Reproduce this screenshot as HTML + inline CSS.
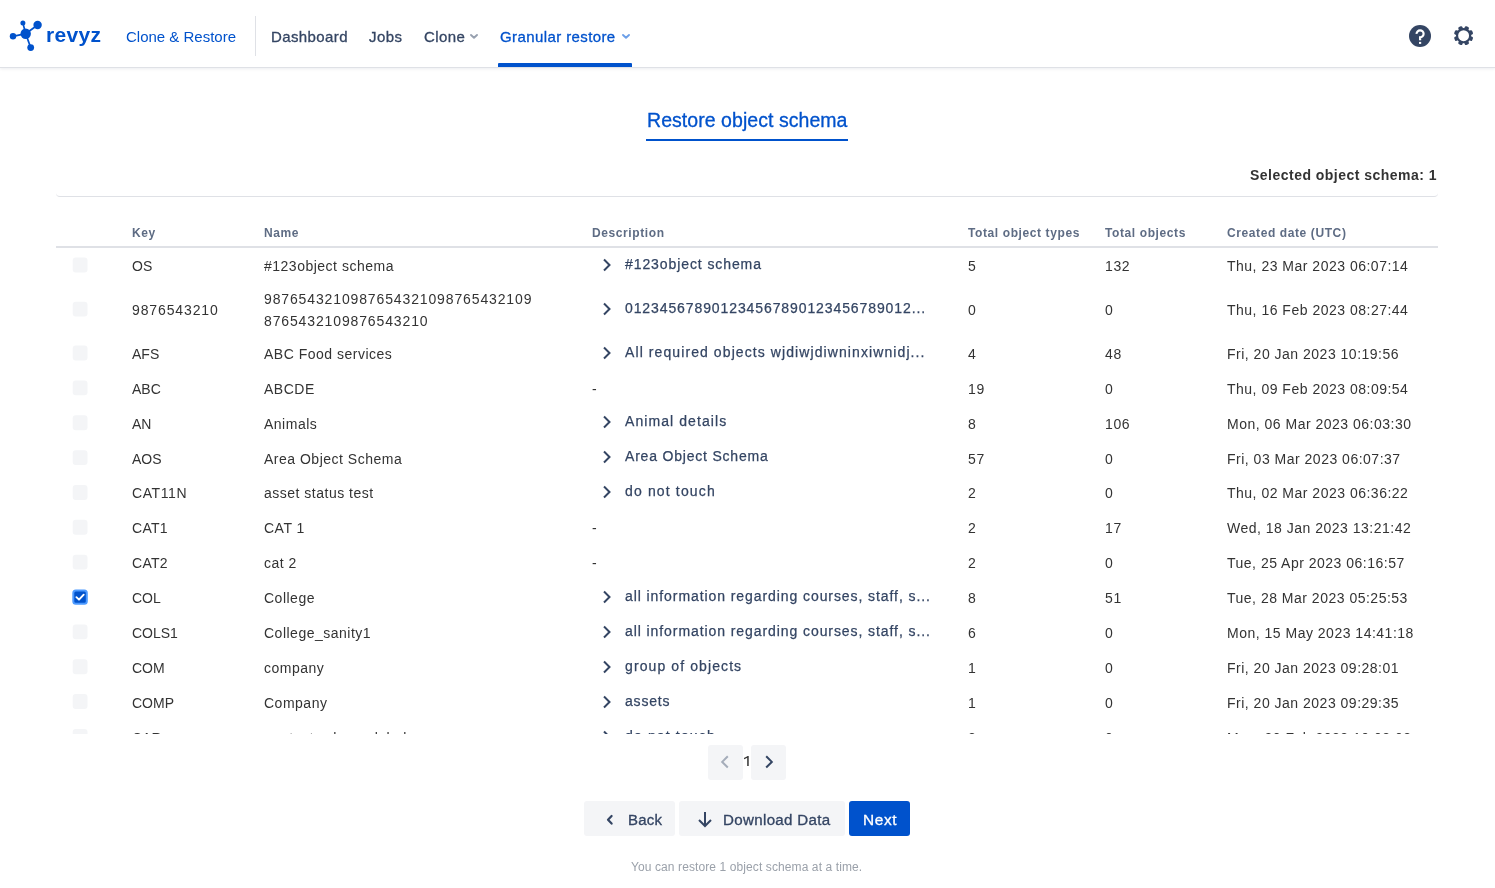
<!DOCTYPE html>
<html><head><meta charset="utf-8">
<style>
html,body{margin:0;padding:0;background:#fff;width:1495px;height:888px;overflow:hidden;font-family:"Liberation Sans",sans-serif;}
#root{position:absolute;left:0;top:0;width:1495px;height:888px;will-change:transform;background:#fff;}
.a{position:absolute;white-space:pre;line-height:1;}
#hdr{position:absolute;left:0;top:0;width:1495px;height:67px;background:#fff;border-bottom:1px solid #dfe1e6;box-shadow:0 1px 3px rgba(9,30,66,0.08);}
.nav{position:absolute;top:29px;font-size:15px;line-height:1;white-space:pre;color:#344563;-webkit-text-stroke:0.3px currentColor;letter-spacing:0.4px;}
#tbl{position:absolute;left:0;top:248px;width:1495px;height:486px;overflow:hidden;}
#tbl .in{position:absolute;left:0;top:-248px;width:1495px;height:1000px;}
.c{position:absolute;white-space:pre;line-height:1;font-size:14px;color:#333;}
.nm{letter-spacing:0.75px;}
.ds{color:#344563;letter-spacing:1px;-webkit-text-stroke:0.25px currentColor;}
.dg{letter-spacing:0.6px;}
.dt{letter-spacing:0.5px;}
.cb{position:absolute;left:72.4px;width:15px;height:15px;border-radius:3px;background:#f4f5f7;box-sizing:border-box;}
.cb.on{background:#0052cc;border:2px solid #4c9aff;}
.cb.on svg{position:absolute;left:-2px;top:-2px;}
.chev{position:absolute;left:601px;}
.th{position:absolute;top:227px;font-size:12px;font-weight:bold;color:#5e6c84;line-height:1;white-space:pre;letter-spacing:0.6px;}
.btn{position:absolute;top:801px;height:35px;border-radius:3px;background:#f4f5f7;}
</style></head><body><div id="root">
<div id="hdr">
  <svg style="position:absolute;left:0;top:0" width="48" height="60" viewBox="0 0 48 60">
    <g stroke="#0052cc" stroke-width="1.7" fill="none">
      <line x1="25.7" y1="33.7" x2="22.9" y2="23.1"/>
      <line x1="25.7" y1="33.7" x2="37.6" y2="25"/>
      <line x1="25.7" y1="33.7" x2="13" y2="36.3"/>
      <line x1="25.7" y1="33.7" x2="30.7" y2="47.6"/>
    </g>
    <g fill="#0052cc">
      <circle cx="25.7" cy="33.7" r="5.2"/>
      <circle cx="22.9" cy="23.1" r="2.5"/>
      <circle cx="37.6" cy="25" r="4.2"/>
      <circle cx="13" cy="36.3" r="3.2"/>
      <circle cx="30.7" cy="47.6" r="3.4"/>
    </g>
  </svg>
  <div class="a" style="left:46px;top:24px;font-size:21px;font-weight:bold;color:#0052cc;letter-spacing:0.3px;">revyz</div>
  <div class="nav" style="left:126px;color:#0052cc;letter-spacing:0;-webkit-text-stroke:0;">Clone &amp; Restore</div>
  <div style="position:absolute;left:255px;top:16px;width:1px;height:40px;background:#dfe1e6;"></div>
  <div class="nav" style="left:271px;">Dashboard</div>
  <div class="nav" style="left:369px;">Jobs</div>
  <div class="nav" style="left:424px;">Clone</div>
  <svg style="position:absolute;left:469px;top:32px" width="10" height="9" viewBox="0 0 10 9"><path d="M2 3 L5 5.8 L8 3" fill="none" stroke="#97a0af" stroke-width="1.9" stroke-linecap="round" stroke-linejoin="round"/></svg>
  <div class="nav" style="left:500px;color:#0052cc;">Granular restore</div>
  <svg style="position:absolute;left:621px;top:32px" width="10" height="9" viewBox="0 0 10 9"><path d="M2 3 L5 5.8 L8 3" fill="none" stroke="#6c9fe8" stroke-width="1.9" stroke-linecap="round" stroke-linejoin="round"/></svg>
  <div style="position:absolute;left:498px;top:63px;width:134px;height:4px;background:#0052cc;border-radius:1px 1px 0 0;"></div>
  <svg style="position:absolute;left:1408px;top:24px" width="24" height="24" viewBox="0 0 24 24">
    <circle cx="12" cy="12" r="11" fill="#344563"/>
    <path d="M8.6 9.9 A3.5 3.5 0 1 1 12.1 13.3 L12.1 16.3" fill="none" stroke="#fff" stroke-width="2.2"/>
    <rect x="11" y="17.9" width="2.2" height="2" fill="#fff"/>
  </svg>
  <svg style="position:absolute;left:1452px;top:24px" width="24" height="24" viewBox="0 0 24 24">
    <g fill="#344563"><circle cx="11.6" cy="11.6" r="7.6"/><rect x="9.4" y="1.9" width="4.4" height="6" rx="1.3" transform="rotate(22.5 11.6 11.6)"/><rect x="9.4" y="1.9" width="4.4" height="6" rx="1.3" transform="rotate(67.5 11.6 11.6)"/><rect x="9.4" y="1.9" width="4.4" height="6" rx="1.3" transform="rotate(112.5 11.6 11.6)"/><rect x="9.4" y="1.9" width="4.4" height="6" rx="1.3" transform="rotate(157.5 11.6 11.6)"/><rect x="9.4" y="1.9" width="4.4" height="6" rx="1.3" transform="rotate(202.5 11.6 11.6)"/><rect x="9.4" y="1.9" width="4.4" height="6" rx="1.3" transform="rotate(247.5 11.6 11.6)"/><rect x="9.4" y="1.9" width="4.4" height="6" rx="1.3" transform="rotate(292.5 11.6 11.6)"/><rect x="9.4" y="1.9" width="4.4" height="6" rx="1.3" transform="rotate(337.5 11.6 11.6)"/></g>
    <circle cx="11.6" cy="11.7" r="5.45" fill="#fff"/>
  </svg>
</div>

<div class="a" style="left:647px;top:111px;font-size:19.5px;color:#0052cc;-webkit-text-stroke:0.3px currentColor;letter-spacing:0.05px;">Restore object schema</div>
<div style="position:absolute;left:646px;top:139px;width:202px;height:2px;background:#0052cc;"></div>

<div class="a" style="left:1250px;top:168px;font-size:14px;font-weight:bold;color:#333;letter-spacing:0.48px;">Selected object schema: 1</div>
<div style="position:absolute;left:56px;top:176px;width:1382px;height:20px;border-bottom:1px solid #dfe1e6;border-radius:0 0 4px 4px;"></div>

<div class="th" style="left:132px;">Key</div>
<div class="th" style="left:264px;">Name</div>
<div class="th" style="left:592px;">Description</div>
<div class="th" style="left:968px;">Total object types</div>
<div class="th" style="left:1105px;">Total objects</div>
<div class="th" style="left:1227px;">Created date (UTC)</div>
<div style="position:absolute;left:56px;top:246px;width:1382px;height:2px;background:#dfe1e6;"></div>

<div id="tbl"><div class="in">
<svg style="position:absolute;left:72px;top:257px" width="17" height="17" viewBox="0 0 17 17"><rect x="0.7" y="0.60" width="14.8" height="14.9" rx="3" fill="#f4f5f7"/></svg>
<div class="c" style="left:132px;top:259.05px;letter-spacing:0px">OS</div>
<div class="c nm" style="left:264px;top:259.05px;letter-spacing:0.5px">#123object schema</div>
<svg class="chev" style="top:258.05px" width="12" height="14" viewBox="0 0 12 14"><path d="M3 1.5 L8.5 7 L3 12.5" fill="none" stroke="#344563" stroke-width="2"/></svg>
<div class="c ds" style="left:625px;top:257.05px;letter-spacing:0.91px">#123object schema</div>
<div class="c dg" style="left:968px;top:259.05px">5</div>
<div class="c dg" style="left:1105px;top:259.05px">132</div>
<div class="c dt" style="left:1227px;top:259.05px">Thu, 23 Mar 2023 06:07:14</div>
<svg style="position:absolute;left:72px;top:301px" width="17" height="17" viewBox="0 0 17 17"><rect x="0.7" y="0.65" width="14.8" height="14.9" rx="3" fill="#f4f5f7"/></svg>
<div class="c" style="left:132px;top:303.10px;letter-spacing:0.88px">9876543210</div>
<div class="c nm" style="left:264px;top:292.10px;letter-spacing:0.87px">9876543210987654321098765432109</div>
<div class="c nm" style="left:264px;top:314.10px;letter-spacing:0.87px">8765432109876543210</div>
<svg class="chev" style="top:302.10px" width="12" height="14" viewBox="0 0 12 14"><path d="M3 1.5 L8.5 7 L3 12.5" fill="none" stroke="#344563" stroke-width="2"/></svg>
<div class="c ds" style="left:625px;top:301.10px;letter-spacing:0.9px">012345678901234567890123456789012...</div>
<div class="c dg" style="left:968px;top:303.10px">0</div>
<div class="c dg" style="left:1105px;top:303.10px">0</div>
<div class="c dt" style="left:1227px;top:303.10px">Thu, 16 Feb 2023 08:27:44</div>
<svg style="position:absolute;left:72px;top:345px" width="17" height="17" viewBox="0 0 17 17"><rect x="0.7" y="0.55" width="14.8" height="14.9" rx="3" fill="#f4f5f7"/></svg>
<div class="c" style="left:132px;top:347.00px;letter-spacing:0px">AFS</div>
<div class="c nm" style="left:264px;top:347.00px;letter-spacing:0.5px">ABC Food services</div>
<svg class="chev" style="top:346.00px" width="12" height="14" viewBox="0 0 12 14"><path d="M3 1.5 L8.5 7 L3 12.5" fill="none" stroke="#344563" stroke-width="2"/></svg>
<div class="c ds" style="left:625px;top:345.00px;letter-spacing:1.09px">All required objects wjdiwjdiwninxiwnidj...</div>
<div class="c dg" style="left:968px;top:347.00px">4</div>
<div class="c dg" style="left:1105px;top:347.00px">48</div>
<div class="c dt" style="left:1227px;top:347.00px">Fri, 20 Jan 2023 10:19:56</div>
<svg style="position:absolute;left:72px;top:380px" width="17" height="17" viewBox="0 0 17 17"><rect x="0.7" y="0.45" width="14.8" height="14.9" rx="3" fill="#f4f5f7"/></svg>
<div class="c" style="left:132px;top:381.90px;letter-spacing:0px">ABC</div>
<div class="c nm" style="left:264px;top:381.90px;letter-spacing:0.5px">ABCDE</div>
<div class="c" style="left:592px;top:381.90px">-</div>
<div class="c dg" style="left:968px;top:381.90px">19</div>
<div class="c dg" style="left:1105px;top:381.90px">0</div>
<div class="c dt" style="left:1227px;top:381.90px">Thu, 09 Feb 2023 08:09:54</div>
<svg style="position:absolute;left:72px;top:415px" width="17" height="17" viewBox="0 0 17 17"><rect x="0.7" y="0.30" width="14.8" height="14.9" rx="3" fill="#f4f5f7"/></svg>
<div class="c" style="left:132px;top:416.75px;letter-spacing:0px">AN</div>
<div class="c nm" style="left:264px;top:416.75px;letter-spacing:0.5px">Animals</div>
<svg class="chev" style="top:414.75px" width="12" height="14" viewBox="0 0 12 14"><path d="M3 1.5 L8.5 7 L3 12.5" fill="none" stroke="#344563" stroke-width="2"/></svg>
<div class="c ds" style="left:625px;top:413.75px;letter-spacing:1.08px">Animal details</div>
<div class="c dg" style="left:968px;top:416.75px">8</div>
<div class="c dg" style="left:1105px;top:416.75px">106</div>
<div class="c dt" style="left:1227px;top:416.75px">Mon, 06 Mar 2023 06:03:30</div>
<svg style="position:absolute;left:72px;top:450px" width="17" height="17" viewBox="0 0 17 17"><rect x="0.7" y="0.15" width="14.8" height="14.9" rx="3" fill="#f4f5f7"/></svg>
<div class="c" style="left:132px;top:451.60px;letter-spacing:0px">AOS</div>
<div class="c nm" style="left:264px;top:451.60px;letter-spacing:0.5px">Area Object Schema</div>
<svg class="chev" style="top:449.60px" width="12" height="14" viewBox="0 0 12 14"><path d="M3 1.5 L8.5 7 L3 12.5" fill="none" stroke="#344563" stroke-width="2"/></svg>
<div class="c ds" style="left:625px;top:448.60px;letter-spacing:0.8px">Area Object Schema</div>
<div class="c dg" style="left:968px;top:451.60px">57</div>
<div class="c dg" style="left:1105px;top:451.60px">0</div>
<div class="c dt" style="left:1227px;top:451.60px">Fri, 03 Mar 2023 06:07:37</div>
<svg style="position:absolute;left:72px;top:485px" width="17" height="17" viewBox="0 0 17 17"><rect x="0.7" y="0.00" width="14.8" height="14.9" rx="3" fill="#f4f5f7"/></svg>
<div class="c" style="left:132px;top:486.45px;letter-spacing:0.6px">CAT11N</div>
<div class="c nm" style="left:264px;top:486.45px;letter-spacing:0.5px">asset status test</div>
<svg class="chev" style="top:485.45px" width="12" height="14" viewBox="0 0 12 14"><path d="M3 1.5 L8.5 7 L3 12.5" fill="none" stroke="#344563" stroke-width="2"/></svg>
<div class="c ds" style="left:625px;top:484.45px;letter-spacing:1.15px">do not touch</div>
<div class="c dg" style="left:968px;top:486.45px">2</div>
<div class="c dg" style="left:1105px;top:486.45px">0</div>
<div class="c dt" style="left:1227px;top:486.45px">Thu, 02 Mar 2023 06:36:22</div>
<svg style="position:absolute;left:72px;top:519px" width="17" height="17" viewBox="0 0 17 17"><rect x="0.7" y="0.85" width="14.8" height="14.9" rx="3" fill="#f4f5f7"/></svg>
<div class="c" style="left:132px;top:521.30px;letter-spacing:0.3px">CAT1</div>
<div class="c nm" style="left:264px;top:521.30px;letter-spacing:0.5px">CAT 1</div>
<div class="c" style="left:592px;top:521.30px">-</div>
<div class="c dg" style="left:968px;top:521.30px">2</div>
<div class="c dg" style="left:1105px;top:521.30px">17</div>
<div class="c dt" style="left:1227px;top:521.30px">Wed, 18 Jan 2023 13:21:42</div>
<svg style="position:absolute;left:72px;top:554px" width="17" height="17" viewBox="0 0 17 17"><rect x="0.7" y="0.70" width="14.8" height="14.9" rx="3" fill="#f4f5f7"/></svg>
<div class="c" style="left:132px;top:556.15px;letter-spacing:0.3px">CAT2</div>
<div class="c nm" style="left:264px;top:556.15px;letter-spacing:0.5px">cat 2</div>
<div class="c" style="left:592px;top:556.15px">-</div>
<div class="c dg" style="left:968px;top:556.15px">2</div>
<div class="c dg" style="left:1105px;top:556.15px">0</div>
<div class="c dt" style="left:1227px;top:556.15px">Tue, 25 Apr 2023 06:16:57</div>
<svg style="position:absolute;left:72px;top:589px" width="17" height="17" viewBox="0 0 17 17"><rect x="1.3" y="1.55" width="13.5" height="13.2" rx="2.5" fill="#0052cc" stroke="#4c9aff" stroke-width="2"/><path d="M4.4 8.15 L7 10.65 L11.7 5.65" fill="none" stroke="#fff" stroke-width="1.9" stroke-linecap="round" stroke-linejoin="round"/></svg>
<div class="c" style="left:132px;top:591.00px;letter-spacing:0px">COL</div>
<div class="c nm" style="left:264px;top:591.00px;letter-spacing:0.5px">College</div>
<svg class="chev" style="top:590.00px" width="12" height="14" viewBox="0 0 12 14"><path d="M3 1.5 L8.5 7 L3 12.5" fill="none" stroke="#344563" stroke-width="2"/></svg>
<div class="c ds" style="left:625px;top:589.00px;letter-spacing:0.92px">all information regarding courses, staff, s...</div>
<div class="c dg" style="left:968px;top:591.00px">8</div>
<div class="c dg" style="left:1105px;top:591.00px">51</div>
<div class="c dt" style="left:1227px;top:591.00px">Tue, 28 Mar 2023 05:25:53</div>
<svg style="position:absolute;left:72px;top:624px" width="17" height="17" viewBox="0 0 17 17"><rect x="0.7" y="0.40" width="14.8" height="14.9" rx="3" fill="#f4f5f7"/></svg>
<div class="c" style="left:132px;top:625.85px;letter-spacing:0px">COLS1</div>
<div class="c nm" style="left:264px;top:625.85px;letter-spacing:0.5px">College_sanity1</div>
<svg class="chev" style="top:624.85px" width="12" height="14" viewBox="0 0 12 14"><path d="M3 1.5 L8.5 7 L3 12.5" fill="none" stroke="#344563" stroke-width="2"/></svg>
<div class="c ds" style="left:625px;top:623.85px;letter-spacing:0.92px">all information regarding courses, staff, s...</div>
<div class="c dg" style="left:968px;top:625.85px">6</div>
<div class="c dg" style="left:1105px;top:625.85px">0</div>
<div class="c dt" style="left:1227px;top:625.85px">Mon, 15 May 2023 14:41:18</div>
<svg style="position:absolute;left:72px;top:659px" width="17" height="17" viewBox="0 0 17 17"><rect x="0.7" y="0.25" width="14.8" height="14.9" rx="3" fill="#f4f5f7"/></svg>
<div class="c" style="left:132px;top:660.70px;letter-spacing:0px">COM</div>
<div class="c nm" style="left:264px;top:660.70px;letter-spacing:0.5px">company</div>
<svg class="chev" style="top:659.70px" width="12" height="14" viewBox="0 0 12 14"><path d="M3 1.5 L8.5 7 L3 12.5" fill="none" stroke="#344563" stroke-width="2"/></svg>
<div class="c ds" style="left:625px;top:658.70px;letter-spacing:1.1px">group of objects</div>
<div class="c dg" style="left:968px;top:660.70px">1</div>
<div class="c dg" style="left:1105px;top:660.70px">0</div>
<div class="c dt" style="left:1227px;top:660.70px">Fri, 20 Jan 2023 09:28:01</div>
<svg style="position:absolute;left:72px;top:694px" width="17" height="17" viewBox="0 0 17 17"><rect x="0.7" y="0.10" width="14.8" height="14.9" rx="3" fill="#f4f5f7"/></svg>
<div class="c" style="left:132px;top:695.55px;letter-spacing:0px">COMP</div>
<div class="c nm" style="left:264px;top:695.55px;letter-spacing:0.5px">Company</div>
<svg class="chev" style="top:694.55px" width="12" height="14" viewBox="0 0 12 14"><path d="M3 1.5 L8.5 7 L3 12.5" fill="none" stroke="#344563" stroke-width="2"/></svg>
<div class="c ds" style="left:625px;top:693.55px;letter-spacing:0.8px">assets</div>
<div class="c dg" style="left:968px;top:695.55px">1</div>
<div class="c dg" style="left:1105px;top:695.55px">0</div>
<div class="c dt" style="left:1227px;top:695.55px">Fri, 20 Jan 2023 09:29:35</div>
<svg style="position:absolute;left:72px;top:728px" width="17" height="17" viewBox="0 0 17 17"><rect x="0.7" y="0.95" width="14.8" height="14.9" rx="3" fill="#f4f5f7"/></svg>
<div class="c" style="left:132px;top:731.40px;letter-spacing:0px">CAR</div>
<div class="c nm" style="left:264px;top:731.40px;letter-spacing:0.5px">car test schema label</div>
<svg class="chev" style="top:730.40px" width="12" height="14" viewBox="0 0 12 14"><path d="M3 1.5 L8.5 7 L3 12.5" fill="none" stroke="#344563" stroke-width="2"/></svg>
<div class="c ds" style="left:625px;top:729.40px;letter-spacing:1.15px">do not touch</div>
<div class="c dg" style="left:968px;top:731.40px">2</div>
<div class="c dg" style="left:1105px;top:731.40px">0</div>
<div class="c dt" style="left:1227px;top:731.40px">Mon, 20 Feb 2023 10:08:08</div>
</div></div>

<div class="btn" style="left:708px;top:745px;width:35px;height:35px;"></div>
<svg style="position:absolute;left:718px;top:753px" width="14" height="18" viewBox="0 0 14 18"><path d="M9.8 3.3 L4.2 8.9 L9.8 14.5" fill="none" stroke="#a5adba" stroke-width="2"/></svg>
<svg style="position:absolute;left:742px;top:754px" width="10" height="14" viewBox="0 0 10 14"><path d="M5.2 12 L6.7 12 L6.7 2 L5.6 2 C4.8 2.8 3.4 3.5 1.9 4 L2.3 5.2 C3.3 4.9 4.4 4.4 5.2 3.8 Z" fill="#333"/></svg>
<div class="btn" style="left:751px;top:745px;width:35px;height:35px;"></div>
<svg style="position:absolute;left:762px;top:753px" width="14" height="18" viewBox="0 0 14 18"><path d="M4.2 3.3 L9.8 8.9 L4.2 14.5" fill="none" stroke="#344563" stroke-width="2"/></svg>

<div class="btn" style="left:584px;width:91px;"></div>
<svg style="position:absolute;left:604px;top:811.5px" width="12" height="16" viewBox="0 0 12 16"><path d="M7.6 4 L4 7.8 L7.6 11.6" fill="none" stroke="#344563" stroke-width="2.2" stroke-linecap="round" stroke-linejoin="round"/></svg>
<div class="a" style="left:628px;top:813px;font-size:14px;color:#344563;-webkit-text-stroke:0.3px currentColor;letter-spacing:0.2px;transform:scaleX(1.07);transform-origin:0 0;">Back</div>
<div class="btn" style="left:679px;width:166px;"></div>
<svg style="position:absolute;left:696px;top:810px" width="18" height="18" viewBox="0 0 18 18"><path d="M9 2 L9 16 M3 10 L9 16 L15 10" fill="none" stroke="#344563" stroke-width="2"/></svg>
<div class="a" style="left:723px;top:813px;font-size:14px;color:#344563;-webkit-text-stroke:0.3px currentColor;letter-spacing:0.3px;transform:scaleX(1.08);transform-origin:0 0;">Download Data</div>
<div class="btn" style="left:849px;width:61px;background:#0052cc;"></div>
<div class="a" style="left:863px;top:813px;font-size:14px;color:#fff;-webkit-text-stroke:0.3px currentColor;letter-spacing:0.6px;transform:scaleX(1.1);transform-origin:0 0;">Next</div>

<div class="a" style="left:631px;top:861px;font-size:12px;color:#9ba1aa;letter-spacing:0.1px;">You can restore 1 object schema at a time.</div>
</div></body></html>
